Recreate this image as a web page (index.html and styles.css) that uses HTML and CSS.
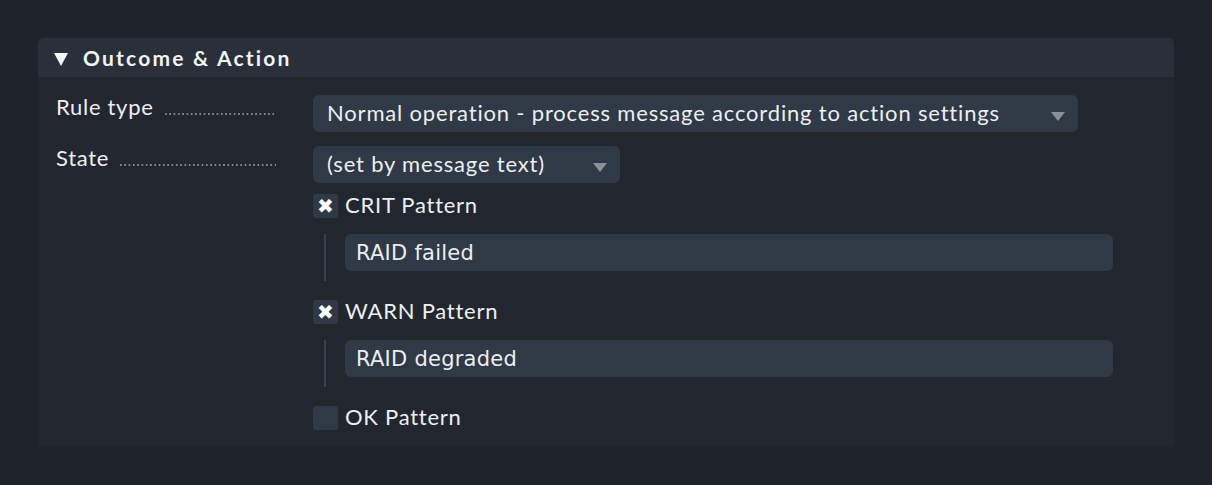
FILE: index.html
```html
<!DOCTYPE html>
<html>
<head>
<meta charset="utf-8">
<link rel="stylesheet" href="styles.css">
</head>
<body>
<div class="panel">
  <div class="panel-head">
    <span class="head-tri"></span>
    <span class="head-title">Outcome &amp; Action</span>
  </div>
  <div class="panel-body">
    <div class="row">
      <div class="label"><span class="label-text">Rule type</span><span class="dots"></span></div>
      <div class="field">
        <div class="select select-wide">
          <span class="select-text">Normal operation - process message according to action settings</span>
          <span class="select-arrow"></span>
        </div>
      </div>
    </div>
    <div class="row">
      <div class="label"><span class="label-text">State</span><span class="dots"></span></div>
      <div class="field">
        <div class="select select-narrow">
          <span class="select-text">(set by message text)</span>
          <span class="select-arrow"></span>
        </div>
        <div class="check-row">
          <span class="checkbox checked">✖</span><span class="check-label">CRIT Pattern</span>
        </div>
        <div class="sub">
          <div class="input">RAID failed</div>
        </div>
        <div class="check-row">
          <span class="checkbox checked">✖</span><span class="check-label">WARN Pattern</span>
        </div>
        <div class="sub">
          <div class="input">RAID degraded</div>
        </div>
        <div class="check-row">
          <span class="checkbox"></span><span class="check-label">OK Pattern</span>
        </div>
      </div>
    </div>
  </div>
</div>
</body>
</html>
```

FILE: styles.css
```css
html, body {
  margin: 0;
  padding: 0;
  background: #1e222a;
}
body {
  padding: 38px 38px 0 38px;
  font-family: Lato, "Noto Sans", sans-serif;
  color: #eceef1;
}
.panel {
  width: 1136px;
  height: 409px;
  background: #22272f;
  border-radius: 6px 6px 0 0;
}
.panel-head {
  height: 39px;
  background: #29303a;
  border-radius: 6px 6px 0 0;
  display: flex;
  align-items: center;
  padding-left: 16px;
}
.head-tri {
  width: 0;
  height: 0;
  border-left: 7px solid transparent;
  border-right: 7px solid transparent;
  border-top: 13px solid #f4f5f6;
  margin-top: 3px;
}
.head-title {
  margin-left: 15px;
  font-weight: 700;
  font-size: 21px;
  letter-spacing: 2.2px;
  color: #f2f3f5;
}
.panel-body {
  padding: 18px 0 0 18px;
}
.row {
  display: flex;
  align-items: flex-start;
  margin-bottom: 14px;
}
.label {
  width: 220px;
  margin-right: 37px;
  display: flex;
  align-items: baseline;
  font-size: 22px;
  letter-spacing: 0.7px;
  line-height: 24px;
}
.label-text {
  white-space: nowrap;
}
.dots {
  flex: 1;
  margin-left: 11px;
  height: 2px;
  background-image: linear-gradient(to right, #80858d 0, #80858d 1.6px, transparent 1.6px);
  background-size: 4.3px 2px;
  background-repeat: repeat-x;
}
.field {
  display: flex;
  flex-direction: column;
  align-items: flex-start;
}
.select {
  height: 37px;
  background: #303946;
  border-radius: 6px;
  display: flex;
  align-items: center;
  padding-left: 14px;
  box-sizing: border-box;
  font-size: 22px;
  letter-spacing: 0.82px;
  color: #eceef1;
}
.select-wide {
  width: 765px;
}
.select-narrow {
  width: 307px;
}
.select-text {
  flex: 1;
  white-space: nowrap;
  margin-bottom: 2px;
}
.select-arrow {
  width: 0;
  height: 0;
  border-left: 7px solid transparent;
  border-right: 7px solid transparent;
  border-top: 9px solid #8d9197;
  margin-right: 13px;
  margin-top: 6px;
}
.check-row {
  display: flex;
  align-items: center;
  margin-top: 19px;
  height: 24px;
}
.field > .select + .check-row {
  margin-top: 11px;
}
.checkbox {
  width: 25px;
  height: 24px;
  background: #303946;
  border-radius: 3px;
  display: flex;
  align-items: center;
  justify-content: center;
  font-family: "DejaVu Sans", sans-serif;
  font-size: 20px;
  color: #ffffff;
  line-height: 1;
}
.check-label {
  margin-left: 7px;
  margin-bottom: 4px;
  font-size: 22px;
  letter-spacing: 0.75px;
}
.sub {
  margin-top: 16px;
  margin-left: 11px;
  padding-left: 19px;
  border-left: 2px solid #38414d;
  height: 47px;
}
.input {
  width: 768px;
  height: 37px;
  box-sizing: border-box;
  background: #303946;
  border-radius: 6px;
  padding-left: 11px;
  display: flex;
  align-items: center;
  font-family: "DejaVu Sans", sans-serif;
  font-size: 21px;
  letter-spacing: 0.25px;
  color: #eceef1;
}
```
